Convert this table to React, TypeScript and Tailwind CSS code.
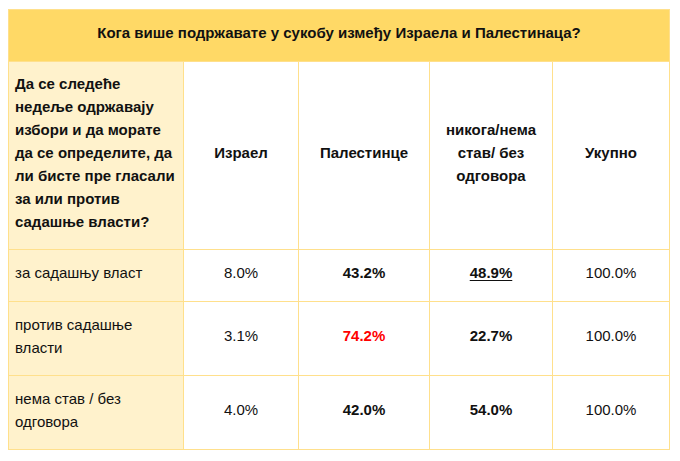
const rows = [
  {
    label: "за садашњу власт",
    cells: [
      { v: "8.0%", cls: "" },
      { v: "43.2%", cls: "font-bold" },
      { v: "48.9%", cls: "font-bold underline underline-offset-2" },
      { v: "100.0%", cls: "" },
    ],
  },
  {
    label: "против садашње власти",
    cells: [
      { v: "3.1%", cls: "" },
      { v: "74.2%", cls: "font-bold text-[#ff0000]" },
      { v: "22.7%", cls: "font-bold" },
      { v: "100.0%", cls: "" },
    ],
  },
  {
    label: "нема став / без одговора",
    cells: [
      { v: "4.0%", cls: "" },
      { v: "42.0%", cls: "font-bold" },
      { v: "54.0%", cls: "font-bold" },
      { v: "100.0%", cls: "" },
    ],
  },
];

const heads = ["Израел", "Палестинце", "никога/нема став/ без одговора", "Укупно"];

export default function App() {
  return (
    <div className="w-[680px] h-[461px] bg-white pt-[9px] pl-[8px] font-['Liberation_Sans',Arial,sans-serif] text-[15px] leading-[23px] text-[#111]">
      <table className="border-collapse table-fixed w-[661px]">
        <colgroup>
          <col className="w-[175px]" />
          <col className="w-[115px]" />
          <col className="w-[131px]" />
          <col className="w-[123px]" />
          <col className="w-[117px]" />
        </colgroup>
        <tbody>
          <tr className="h-[52px]">
            <td
              colSpan={5}
              className="bg-[#ffd966] border border-[#ffe08c] text-center font-bold px-2 pb-[6px]"
            >
              Кога више подржавате у сукобу између Израела и Палестинаца?
            </td>
          </tr>
          <tr className="h-[188px]">
            <td className="bg-[#fff2cc] border border-[#ffe08c] font-bold pl-[6px] pr-1 pt-[6px] pb-[12px] align-middle">
              Да се следеће недеље одржавају избори и да морате да се определите, да ли бисте пре гласали за или против садашње власти?
            </td>
            {heads.map((h) => (
              <td
                key={h}
                className="border border-[#ffe08c] text-center font-bold px-4 pb-[6px] align-middle"
              >
                {h}
              </td>
            ))}
          </tr>
          {rows.map((r, i) => (
            <tr key={r.label} className={i === 0 ? "h-[52px]" : "h-[74px]"}>
              <td className="bg-[#fff2cc] border border-[#ffe08c] pl-[6px] pr-6 pb-[6px] align-middle">
                {r.label}
              </td>
              {r.cells.map((c, j) => (
                <td
                  key={j}
                  className={`border border-[#ffe08c] text-center pb-[6px] align-middle ${c.cls}`}
                >
                  {c.v}
                </td>
              ))}
            </tr>
          ))}
        </tbody>
      </table>
    </div>
  );
}
